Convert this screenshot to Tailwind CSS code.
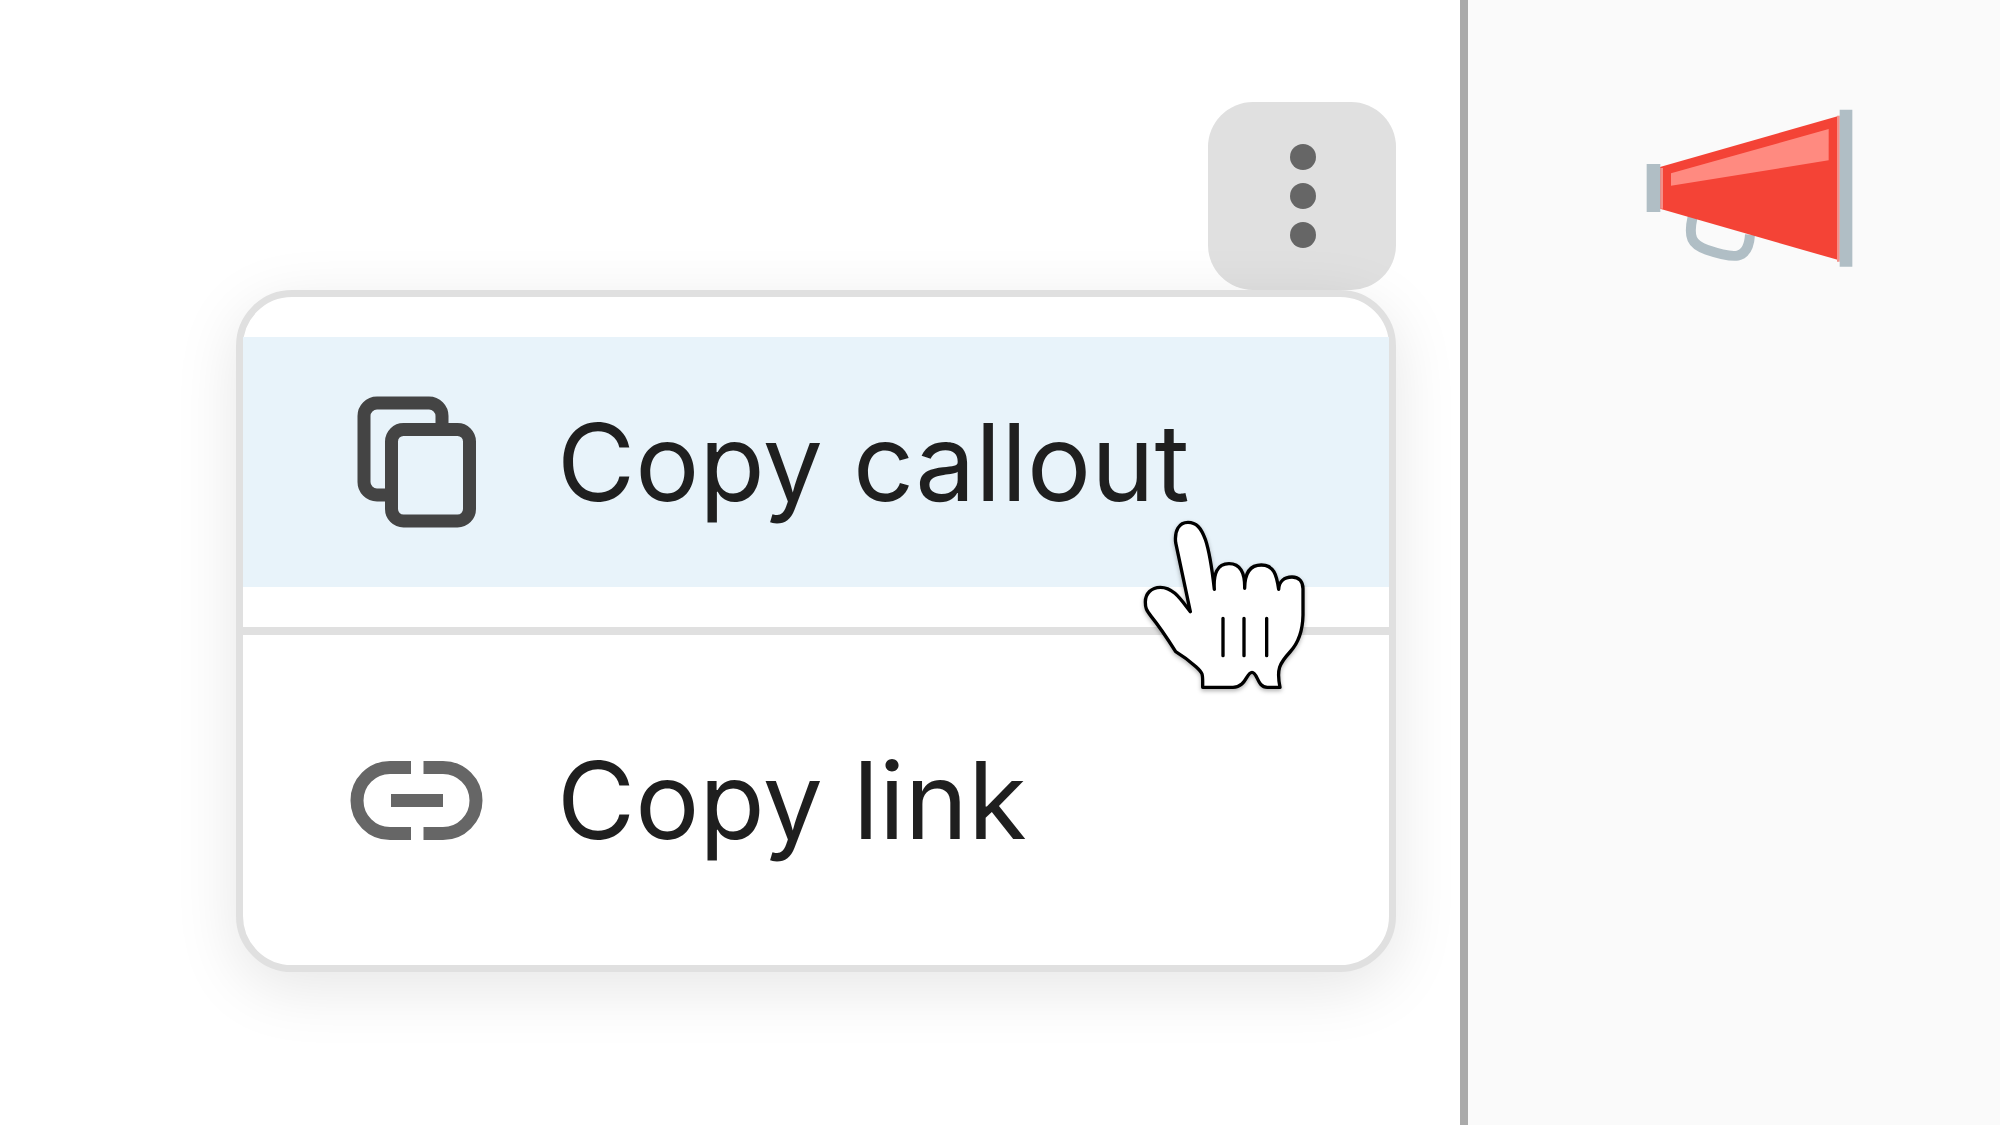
<!DOCTYPE html>
<html lang="en">
<head>
    <meta charset="UTF-8">
    <meta name="viewport" content="width=device-width, initial-scale=1.0">
    <title>Callout menu</title>
    <script src="https://cdn.jsdelivr.net/npm/@tailwindcss/browser@4"></script>
</head>
<body class="bg-white text-[#1f1f1f] font-['Inter',sans-serif]">
    <div class="flex min-h-screen overflow-hidden">
        <!-- Content with the actions menu -->
        <main class="flex-1 flex flex-col items-end pt-[102px] pr-16">
            <button type="button" aria-label="More actions" aria-haspopup="menu" aria-expanded="true" class="size-[188px] rounded-[45px] bg-[#e0e0e0] flex items-center justify-center">
                <svg class="size-[120px]" viewBox="0 0 120 120" fill="#666">
                    <circle cx="61" cy="21" r="13" />
                    <circle cx="61" cy="60" r="13" />
                    <circle cx="61" cy="99" r="13" />
                </svg>
            </button>

            <div role="menu" class="relative w-full max-w-[1160px] bg-white border-7 border-[#e0e0e0] rounded-[56px] shadow-[0_16px_64px_rgba(0,0,0,0.1)]">
                <div class="py-10">
                    <button type="button" role="menuitem" class="w-full h-[250px] pl-[93px] flex items-center gap-[61px] bg-[#e8f3fa] text-[107px] leading-none cursor-pointer">
                        <svg class="size-40 shrink-0" viewBox="0 0 160 160" fill="none" stroke="#444" stroke-width="13">
                            <path d="M106 47V34a13 13 0 0 0-13-13H41a13 13 0 0 0-13 13v66a13 13 0 0 0 13 13h14" />
                            <rect x="55.5" y="47.5" width="78" height="91.5" rx="12" />
                        </svg>
                        Copy callout
                    </button>
                </div>
                <div role="separator" class="h-2 bg-[#e0e0e0]"></div>
                <div class="py-10">
                    <button type="button" role="menuitem" class="w-full h-[250px] pl-[93px] flex items-center gap-[61px] text-[107px] leading-none cursor-pointer">
                        <svg class="size-40 shrink-0" viewBox="0 0 160 160" fill="none" stroke="#666" stroke-width="13">
                            <path d="M75 47.5H54a33 33 0 0 0 0 66h21M87.5 47.5H107a33 33 0 0 1 0 66H87.5M55 80.5h52" />
                        </svg>
                        Copy link
                    </button>
                </div>

                <!-- Hand pointer -->
                <svg class="absolute top-[203px] right-[49px] w-[220px] h-[210px] pointer-events-none drop-shadow-[0_2px_2px_rgba(0,0,0,0.3)]" viewBox="0 0 660 630" fill="#fff" stroke="#000" stroke-width="10" stroke-linecap="round" stroke-linejoin="round">
                    <path d="M211 335L167 128C163 92 177 67 204 67C229 67 243 83 256 118C270 160 276 205 283 268C280 222 291 191 327 191C361 191 375 218 374 265C374 220 389 195 424 195C461 195 470 224 476 268C477 244 493 231 516 231C538 231 549 246 549 266V345C548 399 534 430 510 456C478 491 469 507 480 562H442C411 562 413 517 396 517C379 517 378 562 339 562H248C248 522 251 521 228 500C202 477 190 469 167 455C141 414 121 383 94 350C78 330 76 323 76 306C76 281 94 262 121 262C161 262 184 301 211 335Z" />
                    <path d="M309 355v112M372 355v112M440 355v112" />
                </svg>
            </div>
        </main>

        <!-- Callout icon column -->
        <aside class="w-[27%] shrink-0 border-l-8 border-[#aaa] bg-[#fafafa] pt-[109px] pl-[177px]">
            <svg role="img" aria-label="Megaphone" class="w-[211px] h-[158px]" viewBox="75 57 633 474">
                <path d="M218 380c-14 62-3 84 42 99c80 27 125 35 130-45" fill="none" stroke="#b0bec5" stroke-width="30" />
                <path d="M120 231L658 77V511L120 356Z" fill="#f44336" />
                <path d="M153 250L626 117V211L153 287Z" fill="#ff8a80" />
                <path d="M121 234h8v122h-8zM651 77h8v438h-8z" fill="#f48f88" />
                <path d="M80 222h41v144H80zM659 59h38v471H659z" fill="#b0bec5" />
            </svg>
        </aside>
    </div>
</body>
</html>
